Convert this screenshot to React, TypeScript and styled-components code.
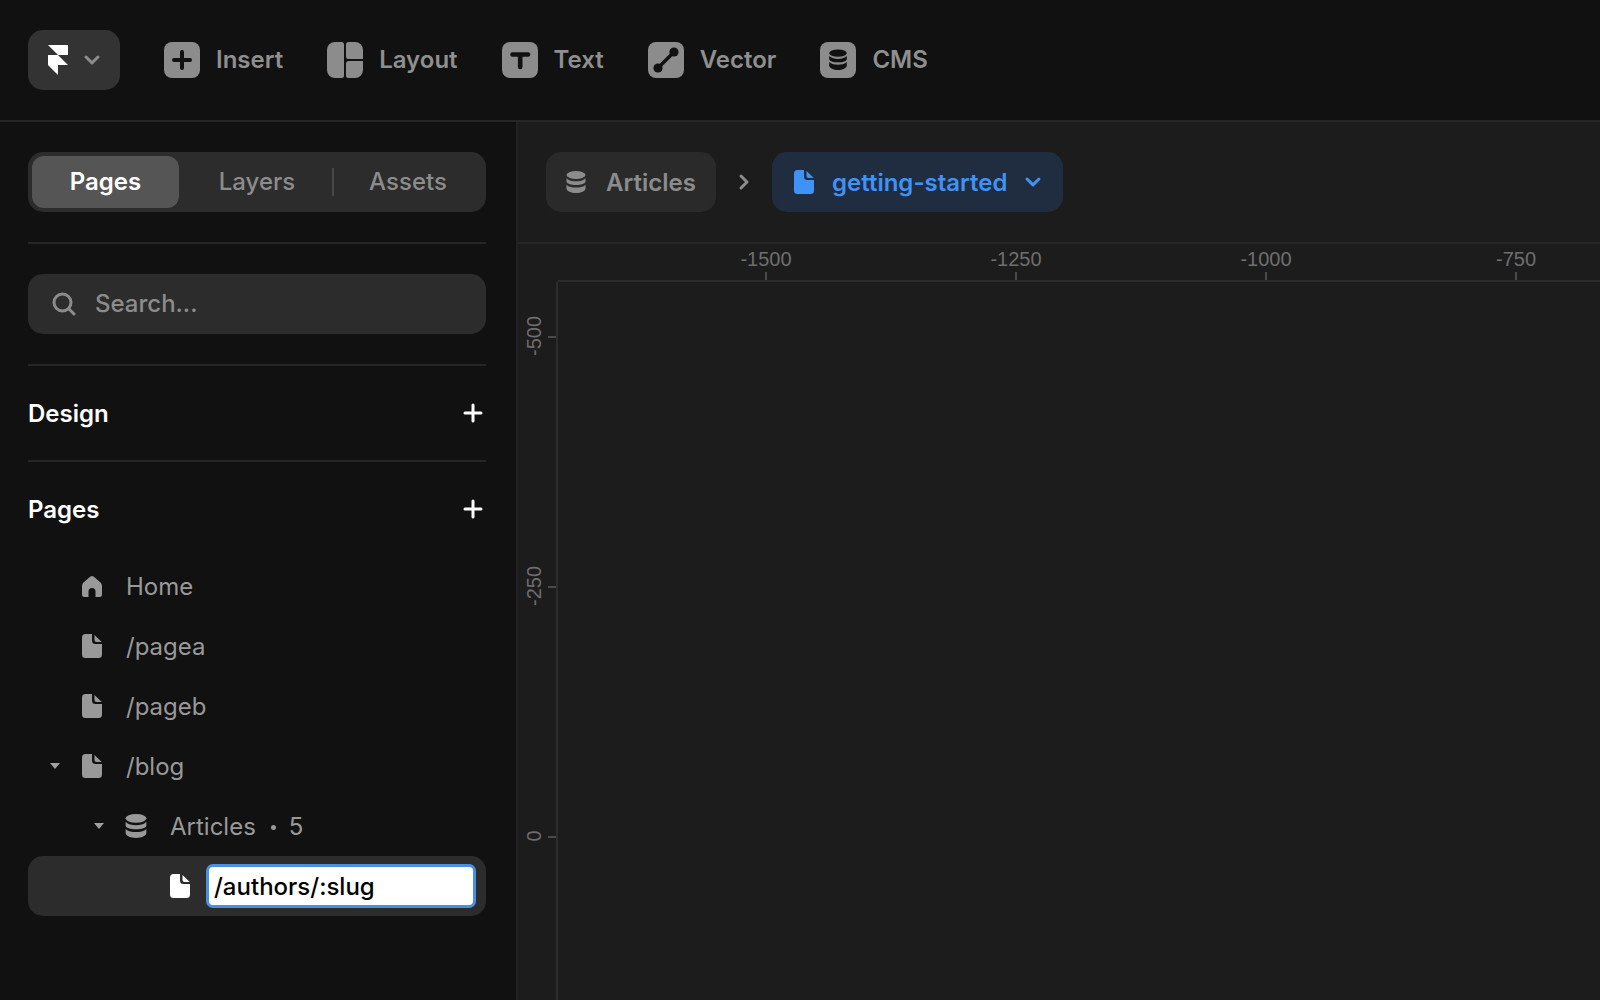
import React from "react";
import styled, { createGlobalStyle } from "styled-components";

const Global = createGlobalStyle`
  html, body { margin: 0; padding: 0; background: #111111; }
  body { font-family: Inter, "Liberation Sans", sans-serif; overflow: hidden; }
  * { box-sizing: border-box; }
`;

const Page = styled.div`
  width: 1600px;
  height: 1000px;
  display: flex;
  flex-direction: column;
  overflow: hidden;
  background: #111111;
`;

const Toolbar = styled.header`
  height: 122px;
  flex: none;
  display: flex;
  align-items: center;
  padding-left: 28px;
  background: #111111;
  border-bottom: 2px solid #262626;
`;

const LogoButton = styled.button`
  width: 92px;
  height: 60px;
  margin-right: 44px;
  border: 0;
  padding: 0 0 0 20px;
  display: flex;
  align-items: center;
  gap: 16px;
  background: #333333;
  border-radius: 15px;
  color: #8c8c8c;
`;

const ToolItem = styled.div`
  display: flex;
  align-items: center;
  gap: 16px;
  margin-right: 44px;
  font-size: 24px;
  font-weight: 600;
  color: #8f8f8f;
  line-height: 36px;
`;

const ToolGlyph = styled.svg`
  width: 36px;
  height: 36px;
  flex: none;
  display: block;
`;

const Main = styled.div`
  flex: 1;
  display: flex;
  min-height: 0;
`;

const Sidebar = styled.aside`
  width: 518px;
  flex: none;
  background: #111111;
  border-right: 2px solid #222222;
  padding: 0 30px 0 28px;
  display: flex;
  flex-direction: column;
`;

const SideBlock = styled.div<{ $h: number }>`
  height: ${(p) => p.$h}px;
  flex: none;
  display: flex;
  align-items: center;
  justify-content: space-between;
  border-bottom: 2px solid #262626;
`;

const Tabs = styled.div`
  width: 100%;
  height: 60px;
  padding: 4px;
  display: flex;
  align-items: center;
  background: #2c2c2c;
  border-radius: 15px;
`;

const Tab = styled.div<{ $active?: boolean; $w: number; $nudge?: number }>`
  width: ${(p) => p.$w}px;
  height: 52px;
  flex: none;
  display: flex;
  align-items: center;
  justify-content: center;
  padding: 0 0 2px ${(p) => p.$nudge ?? 0}px;
  border-radius: 12px;
  font-size: 24px;
  font-weight: ${(p) => (p.$active ? 600 : 500)};
  color: ${(p) => (p.$active ? "#ffffff" : "#8c8c8c")};
  background: ${(p) => (p.$active ? "#555555" : "transparent")};
`;

const TabDivider = styled.div`
  width: 2px;
  height: 28px;
  flex: none;
  background: #474747;
`;

const SearchBox = styled.div`
  width: 100%;
  height: 60px;
  display: flex;
  align-items: center;
  gap: 19px;
  padding: 0 0 2px 24px;
  background: #2c2c2c;
  border-radius: 15px;
  color: #8c8c8c;
  font-size: 24px;
  font-weight: 500;
`;

const SearchGlyph = styled.svg`
  width: 24px;
  height: 24px;
  flex: none;
  margin-top: 2px;
`;

const SectionTitle = styled.span`
  font-size: 24px;
  font-weight: 600;
  color: #ffffff;
`;

const PlusIcon = styled.svg`
  width: 22px;
  height: 22px;
  margin-right: 2px;
  display: block;
`;

const SectionHead = styled.div`
  height: 94px;
  flex: none;
  display: flex;
  align-items: center;
  justify-content: space-between;
`;

const Row = styled.div<{ $depth: number; $editing?: boolean }>`
  height: 60px;
  flex: none;
  display: flex;
  align-items: center;
  padding-left: ${(p) => 20 + p.$depth * 44}px;
  border-radius: 15px;
  font-size: 24px;
  background: ${(p) => (p.$editing ? "#2c2c2c" : "transparent")};
`;

const CaretSlot = styled.div`
  width: 34px;
  flex: none;
  display: flex;
  align-items: center;
  padding-left: 2px;
`;

const Caret = styled.div`
  width: 0;
  height: 0;
  border-left: 5px solid transparent;
  border-right: 5px solid transparent;
  border-top: 6px solid #a0a0a0;
`;

const RowIcon = styled.div<{ $active?: boolean; $wide?: boolean }>`
  width: ${(p) => (p.$wide ? 23 : 22)}px;
  margin-left: ${(p) => (p.$wide ? -1 : 0)}px;
  flex: none;
  display: flex;
  color: ${(p) => (p.$active ? "#ffffff" : "#999999")};
`;

const RowLabel = styled.span`
  margin-left: 22px;
  color: #999999;
  display: flex;
  align-items: center;
`;

const Count = styled.span`
  display: inline-block;
  width: 5px;
  height: 5px;
  border-radius: 50%;
  background: #999999;
  margin: 2px 13px 0 15px;
`;

const NameInput = styled.div`
  width: 270px;
  height: 44px;
  margin-left: 14px;
  display: flex;
  align-items: center;
  padding-left: 5px;
  background: #ffffff;
  border: 3px solid #4a90e2;
  border-radius: 7px;
  font-size: 24px;
  font-weight: 500;
  color: #000000;
`;

const Canvas = styled.main`
  flex: 1;
  min-width: 0;
  display: flex;
  flex-direction: column;
  background: #1c1c1c;
  overflow: hidden;
`;

const Crumbs = styled.div`
  height: 122px;
  flex: none;
  display: flex;
  align-items: center;
  padding-left: 28px;
  border-bottom: 2px solid #262626;
`;

const Crumb = styled.div<{ $blue?: boolean; $w: number }>`
  width: ${(p) => p.$w}px;
  height: 60px;
  flex: none;
  display: flex;
  align-items: center;
  gap: ${(p) => (p.$blue ? 18 : 20)}px;
  padding-left: ${(p) => (p.$blue ? 22 : 20)}px;
  border-radius: 15px;
  font-size: 24px;
  font-weight: 600;
  color: ${(p) => (p.$blue ? "#3f93f5" : "#8c8c8c")};
  background: ${(p) => (p.$blue ? "#202d40" : "#2a2a2a")};
`;

const CrumbSep = styled.div`
  width: 56px;
  flex: none;
  display: flex;
  justify-content: center;
  color: #8c8c8c;
`;

const TopRuler = styled.div`
  height: 38px;
  flex: none;
  margin-left: 40px;
  padding-left: 83px;
  display: flex;
  align-items: flex-end;
  border-bottom: 2px solid #2c2c2c;
`;

const TopCell = styled.div`
  width: 250px;
  flex: none;
  display: flex;
  flex-direction: column;
  align-items: center;
`;

const RulerText = styled.span`
  font-family: "Liberation Sans", Arial, sans-serif;
  font-size: 20px;
  color: #6e6e6e;
  line-height: 24px;
`;

const TopLabel = styled(RulerText)`
  margin-bottom: 1px;
`;

const TopTick = styled.div`
  width: 2px;
  height: 8px;
  background: #4a4a4a;
`;

const CanvasBody = styled.div`
  flex: 1;
  display: flex;
  min-height: 0;
`;

const LeftRuler = styled.div`
  width: 40px;
  flex: none;
  display: flex;
  flex-direction: column;
  padding-top: 54px;
  border-right: 2px solid #2c2c2c;
`;

const LeftCell = styled.div`
  height: 250px;
  flex: none;
  display: flex;
  justify-content: flex-end;
  align-items: flex-start;
  gap: 4px;
`;

const LeftLabel = styled(RulerText)`
  writing-mode: vertical-rl;
  transform: translateY(-50%) rotate(180deg);
  line-height: 20px;
`;

const LeftTick = styled.div`
  width: 8px;
  height: 2px;
  background: #4a4a4a;
`;

const FileIcon = ({ size = 24 }: { size?: number }) => (
  <svg width={size * (20 / 24)} height={size} viewBox="0 0 20 24" fill="currentColor">
    <path d="M3.5 0H10V6.5a3.5 3.5 0 0 0 3.5 3.5H20V20.5a3.5 3.5 0 0 1-3.5 3.5H3.5A3.5 3.5 0 0 1 0 20.5V3.5A3.5 3.5 0 0 1 3.5 0Z" />
    <path d="M12.5 1 19.8 8H14.5a2 2 0 0 1-2-2Z" />
  </svg>
);

const DbIcon = ({ w = 22, h = 24 }: { w?: number; h?: number }) => (
  <svg width={w} height={h} viewBox="0 0 20 22" fill="currentColor">
    <ellipse cx="10" cy="4" rx="9.5" ry="4" />
    <path d="M.5 7.2C2.5 9.6 6.5 10.3 10 10.3S17.5 9.6 19.5 7.2V10.5C19.5 12.8 15 14 10 14S.5 12.8.5 10.5Z" />
    <path d="M.5 13.7C2.5 16 6.5 16.6 10 16.6S17.5 16 19.5 13.7V17.5C19.5 20.2 15 22 10 22S.5 20.2.5 17.5Z" />
  </svg>
);

const HomeIcon = () => (
  <svg width="20" height="21" viewBox="0 0 20 21" fill="currentColor">
    <path d="M10 0C11 0 12 .8 12.8 1.5L18.5 6.6A4.5 4.5 0 0 1 20 10V18.5A2.5 2.5 0 0 1 17.5 21H13.5V15.5A3.5 3.5 0 0 0 6.5 15.5V21H2.5A2.5 2.5 0 0 1 0 18.5V10A4.5 4.5 0 0 1 1.5 6.6L7.2 1.5C8 .8 9 0 10 0Z" />
  </svg>
);

const Chevron = ({ w = 16 }: { w?: number }) => (
  <svg width={w} height={w * 0.62} viewBox="0 0 16 10" fill="none" stroke="currentColor" strokeWidth="3" strokeLinecap="round" strokeLinejoin="round">
    <path d="M2 2 8 8 14 2" />
  </svg>
);

const BOX = "#8c8c8c";
const INK = "#111111";

const InsertGlyph = () => (
  <ToolGlyph viewBox="0 0 36 36">
    <rect width="36" height="36" rx="8" fill={BOX} />
    <path d="M10 18H26M18 10V26" stroke={INK} strokeWidth="4" strokeLinecap="round" />
  </ToolGlyph>
);

const LayoutGlyph = () => (
  <ToolGlyph viewBox="0 0 36 36">
    <path fill={BOX} d="M8 0H14.5A2.5 2.5 0 0 1 17 2.5V33.5A2.5 2.5 0 0 1 14.5 36H8A8 8 0 0 1 0 28V8A8 8 0 0 1 8 0Z" />
    <path fill={BOX} d="M21.5 0H28A8 8 0 0 1 36 8V17H21.5A2.5 2.5 0 0 1 19 14.5V2.5A2.5 2.5 0 0 1 21.5 0Z" />
    <path fill={BOX} d="M21.5 19H36V28A8 8 0 0 1 28 36H21.5A2.5 2.5 0 0 1 19 33.5V21.5A2.5 2.5 0 0 1 21.5 19Z" />
  </ToolGlyph>
);

const TextGlyph = () => (
  <ToolGlyph viewBox="0 0 36 36">
    <rect width="36" height="36" rx="8" fill={BOX} />
    <path d="M10.5 12.5H26M18.2 12.5V25" stroke={INK} strokeWidth="4.6" strokeLinecap="round" />
  </ToolGlyph>
);

const VectorGlyph = () => (
  <ToolGlyph viewBox="0 0 36 36">
    <rect width="36" height="36" rx="8" fill={BOX} />
    <path d="M10 26 26 10" stroke={INK} strokeWidth="3.4" />
    <circle cx="10" cy="26" r="4.6" fill={INK} />
    <circle cx="26" cy="10" r="4.6" fill={INK} />
  </ToolGlyph>
);

const CmsGlyph = () => (
  <ToolGlyph viewBox="0 0 36 36">
    <rect width="36" height="36" rx="8" fill={BOX} />
    <g transform="translate(9 7.5)" fill={INK}>
      <ellipse cx="9" cy="3.6" rx="8.8" ry="3.6" />
      <path d="M.2 6.6C2 8.8 6 9.4 9 9.4S16 8.8 17.8 6.6V9.4C17.8 11.6 13.5 12.8 9 12.8S.2 11.6.2 9.4Z" />
      <path d="M.2 12.5C2 14.6 6 15.2 9 15.2S16 14.6 17.8 12.5V16C17.8 18.6 13.5 20.6 9 20.6S.2 18.6.2 16Z" />
    </g>
  </ToolGlyph>
);

const tools: { label: string; glyph: React.ReactNode }[] = [
  { label: "Insert", glyph: <InsertGlyph /> },
  { label: "Layout", glyph: <LayoutGlyph /> },
  { label: "Text", glyph: <TextGlyph /> },
  { label: "Vector", glyph: <VectorGlyph /> },
  { label: "CMS", glyph: <CmsGlyph /> },
];

const Plus = () => (
  <PlusIcon viewBox="0 0 22 22" fill="none" stroke="#ffffff" strokeWidth="3" strokeLinecap="round">
    <path d="M3 11H19M11 3V19" />
  </PlusIcon>
);

export default function App() {
  return (
    <Page>
      <Global />
      <Toolbar>
        <LogoButton>
          <svg width="20" height="30" viewBox="0 0 20 30" fill="#ffffff">
            <path d="M0 0H20V10H10Z" />
            <path d="M0 10H10L20 20H10V30L0 20Z" />
          </svg>
          <Chevron />
        </LogoButton>
        {tools.map((t) => (
          <ToolItem key={t.label}>
            {t.glyph}
            {t.label}
          </ToolItem>
        ))}
      </Toolbar>
      <Main>
        <Sidebar>
          <SideBlock $h={122}>
            <Tabs>
              <Tab $active $w={147}>Pages</Tab>
              <Tab $w={153} $nudge={3}>Layers</Tab>
              <TabDivider />
              <Tab $w={148}>Assets</Tab>
            </Tabs>
          </SideBlock>
          <SideBlock $h={122}>
            <SearchBox>
              <SearchGlyph viewBox="0 0 24 24" fill="none" stroke="currentColor" strokeWidth="3" strokeLinecap="round">
                <circle cx="10.5" cy="10.5" r="8.5" />
                <path d="M17 17 22 22" />
              </SearchGlyph>
              Search...
            </SearchBox>
          </SideBlock>
          <SideBlock $h={96}>
            <SectionTitle>Design</SectionTitle>
            <Plus />
          </SideBlock>
          <SectionHead>
            <SectionTitle>Pages</SectionTitle>
            <Plus />
          </SectionHead>
          <Row $depth={0}>
            <CaretSlot />
            <RowIcon><HomeIcon /></RowIcon>
            <RowLabel>Home</RowLabel>
          </Row>
          <Row $depth={0}>
            <CaretSlot />
            <RowIcon><FileIcon /></RowIcon>
            <RowLabel>/pagea</RowLabel>
          </Row>
          <Row $depth={0}>
            <CaretSlot />
            <RowIcon><FileIcon /></RowIcon>
            <RowLabel>/pageb</RowLabel>
          </Row>
          <Row $depth={0}>
            <CaretSlot><Caret /></CaretSlot>
            <RowIcon><FileIcon /></RowIcon>
            <RowLabel>/blog</RowLabel>
          </Row>
          <Row $depth={1}>
            <CaretSlot><Caret /></CaretSlot>
            <RowIcon $wide><DbIcon /></RowIcon>
            <RowLabel>Articles<Count />5</RowLabel>
          </Row>
          <Row $depth={2} $editing>
            <CaretSlot />
            <RowIcon $active><FileIcon /></RowIcon>
            <NameInput>/authors/:slug</NameInput>
          </Row>
        </Sidebar>
        <Canvas>
          <Crumbs>
            <Crumb $w={170}>
              <DbIcon w={20} h={22} />
              Articles
            </Crumb>
            <CrumbSep>
              <svg width="12" height="18" viewBox="0 0 12 18" fill="none" stroke="currentColor" strokeWidth="3" strokeLinecap="round" strokeLinejoin="round">
                <path d="M3 3 9 9 3 15" />
              </svg>
            </CrumbSep>
            <Crumb $blue $w={291}>
              <FileIcon />
              getting-started
              <Chevron />
            </Crumb>
          </Crumbs>
          <TopRuler>
            {["-1500", "-1250", "-1000", "-750"].map((v) => (
              <TopCell key={v}>
                <TopLabel>{v}</TopLabel>
                <TopTick />
              </TopCell>
            ))}
          </TopRuler>
          <CanvasBody>
            <LeftRuler>
              {["-500", "-250", "0"].map((v) => (
                <LeftCell key={v}>
                  <LeftLabel>{v}</LeftLabel>
                  <LeftTick />
                </LeftCell>
              ))}
            </LeftRuler>
          </CanvasBody>
        </Canvas>
      </Main>
    </Page>
  );
}
